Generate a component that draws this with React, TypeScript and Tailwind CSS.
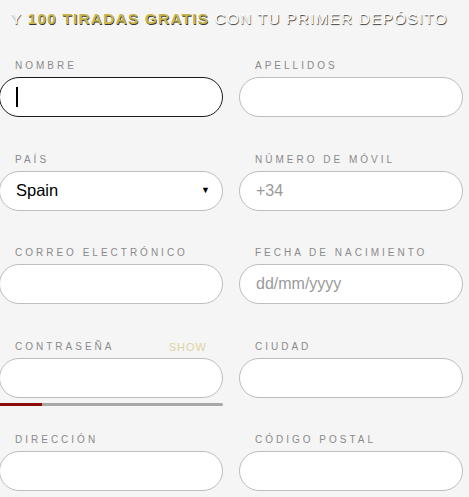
import React from "react";

const font = { fontFamily: '"Liberation Sans", Arial, sans-serif' };

interface FieldProps {
  label: string;
  value?: string;
  placeholder?: string;
  focused?: boolean;
  select?: boolean;
  extra?: React.ReactNode;
  below?: React.ReactNode;
}

const Field = ({ label, value, placeholder, focused, select, extra, below }: FieldProps) => (
  <div className="relative flex flex-col">
    <div className="flex items-center justify-between pl-4 pr-4 mb-[5px] h-3">
      <span className="text-[10px] leading-3 tracking-[3px] text-[#8a8a8a] uppercase">{label}</span>
      {extra}
    </div>
    <div
      className={`h-10 rounded-full bg-white flex items-center px-4 text-base border ${
        focused ? "border-[#1a1a1a]" : "border-[#bdbdbd]"
      }`}
    >
      {focused && <span className="w-[1.5px] h-5 bg-black" />}
      {value && <span className="text-black flex-1 text-[16.5px]">{value}</span>}
      {placeholder && <span className="text-[#9a9a9a] flex-1">{placeholder}</span>}
      {select && <span className="text-[9px] text-black -mr-1">▼</span>}
    </div>
    {below}
  </div>
);

export default function App() {
  return (
    <div className="w-[469px] h-[497px] overflow-hidden bg-[#f5f5f5]" style={font}>
      {/* Promo header */}
      <div className="pt-[9px] pl-[11px] text-[15.5px] leading-5 tracking-[1.15px] uppercase whitespace-nowrap">
        <span className="text-white [text-shadow:0.6px_0.8px_0.8px_rgba(0,0,0,0.75)]">Y </span>
        <span className="font-bold text-[#c9b549] [text-shadow:0.6px_0.8px_0.6px_rgba(0,0,0,0.8)]">100 Tiradas Gratis</span>
        <span className="text-white [text-shadow:0.6px_0.8px_0.8px_rgba(0,0,0,0.75)]"> Con tu primer depósito</span>
      </div>

      {/* Form grid */}
      <div className="mt-[31px] -ml-[1px] grid grid-cols-[224px_224px] gap-x-4 gap-y-[36.5px]">
        <Field label="Nombre" focused />
        <Field label="Apellidos" />
        <Field label="País" value="Spain" select />
        <Field label="Número de móvil" placeholder="+34" />
        <Field label="Correo electrónico" />
        <Field label="Fecha de nacimiento" placeholder="dd/mm/yyyy" />
        <Field
          label="Contraseña"
          extra={<span className="text-[11px] leading-3 tracking-[1px] text-[#ddd3a3]">SHOW</span>}
          below={
            <div className="absolute left-0 right-0 top-[62px] h-[3px] rounded-r-full bg-[#a8a8a8] flex">
              <div className="w-[43px] h-full bg-[#8b0a0a]" />
            </div>
          }
        />
        <Field label="Ciudad" />
        <Field label="Dirección" />
        <Field label="Código postal" />
      </div>
    </div>
  );
}
